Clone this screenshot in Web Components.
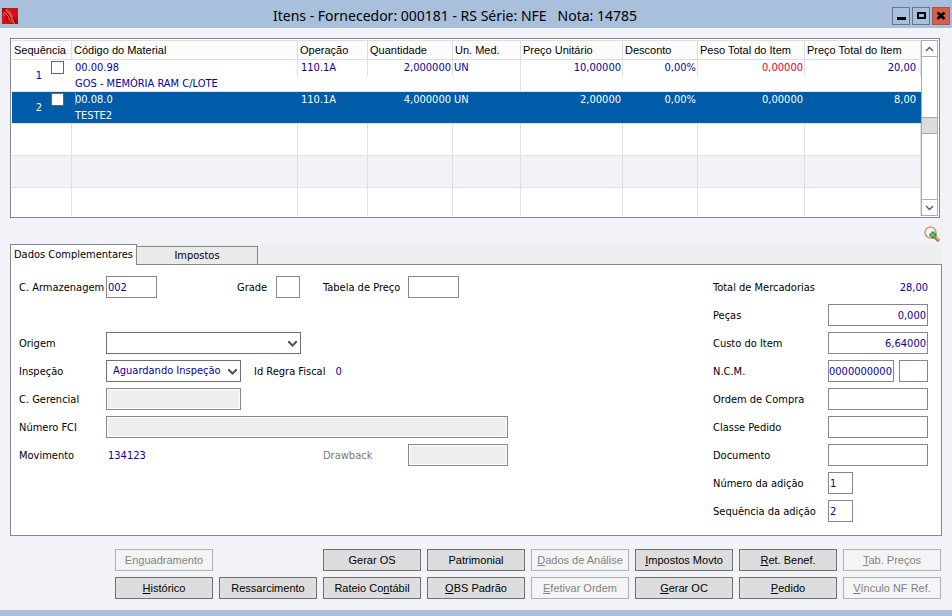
<!DOCTYPE html>
<html lang="pt-BR">
<head>
<meta charset="utf-8">
<title>Itens - Fornecedor</title>
<style>
  :root {
    --ui: "DejaVu Sans Condensed", "DejaVu Sans", sans-serif;
    --sys: "Liberation Sans", Arial, sans-serif;
    --title: "Noto Sans", "Open Sans", sans-serif;
    --face: #f2f3f9;
    --frame: #a8c0dc;
    --edge: #828790;
    --value: #0a00a0;
  }
  body { margin: 0; font: 11px/16px var(--ui); color: #000; background: var(--face); }
</style>
</head>
<body>
<item-window></item-window>
<script>
const define = (name, html, setup) => {
  const tpl = document.createElement('template');
  tpl.innerHTML = html;
  customElements.define(name, class extends HTMLElement {
    connectedCallback() {
      if (this.shadowRoot) return;
      const root = this.attachShadow({ mode: 'open' });
      root.append(tpl.content.cloneNode(true));
      if (setup) setup(this, root);
    }
  });
};

define('title-bar', `
<style>
  :host { display: grid; grid-template-columns: 18px 1fr 60px; align-items: center; height: 28px;
    padding: 4px 2px 0; box-sizing: border-box; background: var(--frame); }
  h1 { margin: 0; font: 14px/20px var(--title); text-align: center; white-space: pre; }
  .logo { display: block; }
  nav { display: flex; gap: 2px; justify-content: flex-end; }
  button { width: 18px; height: 18px; padding: 0; border: 1px solid #66758c; background: #a8c0dc; display: grid; place-items: center; }
  .close { background: #d0614e; border-color: #b8503f; }
</style>
<svg class="logo" width="16" height="16" viewBox="0 0 16 16" aria-hidden="true">
  <rect width="16" height="16" fill="#d41010"/>
  <path d="M0 0h5L0 5zM9 16h7V8z" fill="#b00808"/>
  <path d="M1 6 4 2l3 1 3 4 2 4 2 5h-3L8 9 5 5 2 9z" fill="#ff3a32"/>
  <path d="M5 1l4 4 3 6 2 5M3 3l4 5 2 8M2 6l3 3 1 5" fill="none" stroke="#5c0000" stroke-width="1"/>
  <path d="M4 1l4 3 3 5M2 4l4 4 3 7" fill="none" stroke="#ffb0a8" stroke-width=".6"/>
</svg>
<h1><slot></slot></h1>
<nav>
  <button aria-label="Minimizar"><svg width="16" height="16"><path d="M4 9h9v3H4z"/></svg></button>
  <button aria-label="Maximizar"><svg width="16" height="16"><path d="M4 4h9v7H4zM6 6v3h5V6z" fill-rule="evenodd"/></svg></button>
  <button class="close" aria-label="Fechar"><svg width="16" height="16"><path d="M4.500 4.500l7 6.500M11.500 4.500l-7 6.500" stroke="#000" stroke-width="2.600"/></svg></button>
</nav>`);

define('scroll-bar', `
<style>
  :host { display: flex; flex-direction: column; width: 17px; box-sizing: border-box; border: 1px solid #acacac; background: #fff; }
  button { height: 16px; padding: 0; border: 0; background: #fff; display: grid; place-items: center; box-sizing: border-box; }
  .up { border-bottom: 1px solid #acacac; }
  .down { border-top: 1px solid #acacac; }
  .before { flex: 60; } .after { flex: 65; }
  .thumb { height: 17px; box-sizing: border-box; background: #dcdcdc; border: solid #a8a8a8; border-width: 1px 0; }
  path { fill: none; stroke: #555; stroke-width: 1.3; }
</style>
<button class="up" aria-label="Rolar para cima"><svg width="9" height="6"><path d="M1 5l3.500-3.500L8 5"/></svg></button>
<div class="before"></div><div class="thumb"></div><div class="after"></div>
<button class="down" aria-label="Rolar para baixo"><svg width="9" height="6"><path d="M1 1l3.500 3.500L8 1"/></svg></button>`);

const items = [
  ['1', '00.00.98', 'GOS - MEMÓRIA RAM C/LOTE', '110.1A', '2,000000', 'UN', '10,00000', '0,00%', '0,00000', '20,00'],
  ['2', '00.08.0', 'TESTE2', '110.1A', '4,000000', 'UN', '2,00000', '0,00%', '0,00000', '8,00']
];

define('item-grid', `
<style>
  :host { display: flex; border: 1px solid var(--edge); background: #fff; padding: 1px; height: 176px; }
  .view { flex: 1; overflow: hidden; }
  table { width: 100%; table-layout: fixed; border-collapse: separate; border-spacing: 0; --line: #e1e1e3; }
  th { height: 20px; padding: 0 0 0 2px; box-sizing: border-box; text-align: left; font: 11px/16px var(--sys); white-space: nowrap;
    background: #fcfcfc; border: solid #dedede; border-width: 1px 1px 1px 0; }
  td { height: 32px; padding: 0; box-sizing: border-box; vertical-align: top; white-space: nowrap; color: var(--value);
    border-bottom: 1px solid var(--line); background: linear-gradient(var(--line), var(--line)) right top / 1px 100% no-repeat; }
  .data td { padding: 0 3px; background-size: 1px 16px; }
  .data td:nth-child(5) { background-size: 1px 100%; padding-left: 1px; }
  .data td:first-child { background-image: none; }
  .data td:last-child { padding-right: 5px; }
  .blank.alt td { background-color: #f2f3f9; }
  .data .num { text-align: right; padding-right: 2px; }
  .data .neg { color: #f00018; }
  .selected td { background: #005ba9; color: #fff; }
  .seq { display: grid; grid-template-columns: 27px 13px; column-gap: 9px; justify-content: start; }
  .seq span { line-height: 31px; text-align: right; }
  input { appearance: none; width: 13px; height: 13px; margin: 1px 0 0; border: 1px solid #666; background: #fff; }
  .name { line-height: 15px; }
  .code { position: relative; }
  .selected .code::before { content: ""; position: absolute; left: 0; top: 1px; width: 1px; height: 12px; background: #c98b5a; }
</style>
<div class="view">
<table>
  <colgroup><col style="width:60px"><col><col style="width:70px"><col style="width:85px"><col style="width:68px"><col style="width:102px"><col style="width:75px"><col style="width:107px"><col style="width:116px"></colgroup>
  <thead><tr><th>Sequência</th><th>Código do Material</th><th>Operação</th><th>Quantidade</th><th>Un. Med.</th><th>Preço Unitário</th><th>Desconto</th><th>Peso Total do Item</th><th>Preço Total do Item</th></tr></thead>
  <tbody></tbody>
</table>
</div>
<scroll-bar></scroll-bar>`, (host, root) => {
  const row = (r, i) => `<tr class="data${i === 1 ? ' selected' : ''}"><td><div class="seq"><span>${r[0]}</span><input type="checkbox" aria-label="Item ${r[0]}"></div></td>
    <td><div class="code">${r[1]}</div><div class="name">${r[2]}</div></td><td>${r[3]}</td><td class="num">${r[4]}</td><td>${r[5]}</td>
    <td class="num">${r[6]}</td><td class="num">${r[7]}</td><td class="num${i === 0 ? ' neg' : ''}">${r[8]}</td><td class="num">${r[9]}</td></tr>`;
  const blank = alt => `<tr class="blank${alt ? ' alt' : ''}">${'<td></td>'.repeat(9)}</tr>`;
  root.querySelector('tbody').innerHTML = items.map(row).join('') + blank() + blank(true) + blank();
});

/* Label and control share the grid of the surrounding form. */
define('form-field', `
<style>
  :host { display: contents; }
  label { grid-row: var(--row, auto); grid-column: var(--at, 1); line-height: 24px; height: 22px; white-space: nowrap; }
  .box { grid-row: var(--row, auto); grid-column: var(--to, 2); display: flex; position: relative; width: var(--w, 100%); justify-self: start; }
  input, select { flex: 1; min-width: 0; width: 100%; height: 22px; box-sizing: border-box; margin: 0; padding: 0 1px; border: 1px solid var(--edge); border-radius: 0;
    font: inherit; color: var(--value); background: #fff; outline: 0; }
  select { appearance: none; padding: 0 6px; border-color: #707070; }
  input:disabled { background: #efefef; box-shadow: inset 0 0 0 1px #fff; }
  output { flex: 1; color: var(--value); line-height: 24px; height: 22px; padding-left: 2px; }
  :host([numeric]) input, :host([numeric]) output { text-align: right; }
  :host([muted]) label { color: #777; }
  svg { position: absolute; right: 4px; top: 8px; pointer-events: none; }
</style>
<label for="c"></label><div class="box"></div>`, (host, root) => {
  const kind = host.getAttribute('kind') || 'input', value = host.getAttribute('value') || '';
  const label = root.querySelector('label'), box = root.querySelector('.box');
  label.textContent = host.getAttribute('label');
  if (kind === 'output') box.innerHTML = `<output id="c">${value}</output>`;
  else if (kind === 'select') box.innerHTML = `<select id="c"><option>${value}</option></select><svg width="9" height="7"><path d="M1 1v1l3.500 3.500L8 2V1" fill="none" stroke="#555" stroke-width="2"/></svg>`;
  else box.innerHTML = `<input id="c" value="${value}"${host.hasAttribute('off') ? ' disabled' : ''}>`;
});

define('ncm-field', `
<style>
  :host { display: contents; }
  label { line-height: 24px; height: 22px; }
  div { display: grid; grid-template-columns: 66px 1fr; gap: 5px; }
  input { min-width: 0; height: 22px; box-sizing: border-box; padding: 0; border: 1px solid var(--edge); font: inherit; color: var(--value); background: #fff; }
</style>
<label for="n">N.C.M.</label><div><input id="n" value="0000000000"><input aria-label="N.C.M. complemento"></div>`);

define('tab-panel', `
<style>
  :host { display: block; }
  .strip { display: flex; align-items: flex-end; background: #efefef; height: 20px; }
  button { font: inherit; color: inherit; padding: 0; border: 1px solid var(--edge); border-bottom: 0; box-sizing: border-box; height: 18px; width: 121px; background: #eaeaea; border-left: 0; }
  button[aria-selected=true] { width: 127px; height: 21px; margin-bottom: -1px; background: #fff; border-left: 1px solid var(--edge); position: relative; padding-bottom: 1px; }
  .page { border: 1px solid var(--edge); background: #fff; }
</style>
<div class="strip" role="tablist"><button role="tab" aria-selected="true">Dados Complementares</button><button role="tab" aria-selected="false">Impostos</button></div>
<div class="page" role="tabpanel"><slot></slot></div>`);

define('item-form', `
<style>
  :host { display: flex; justify-content: space-between; padding: 11px 13px 13px 8px; }
  .left, .right { display: grid; grid-auto-rows: 22px; row-gap: 6px; }
  .left { grid-template-columns: 87px 131px 39px 47px 85px 100px; grid-template-rows: repeat(7, 22px); }
  .right { grid-template-columns: 115px 100px; }
  .c2 { --at: 3; --to: 4; } .c3 { --at: 5; --to: 6; }
</style>
<div class="left">
  <form-field label="C. Armazenagem" value="002" style="--row:1;--w:51px"></form-field>
  <form-field class="c2" label="Grade" style="--row:1;--w:24px"></form-field>
  <form-field class="c3" label="Tabela de Preço" style="--row:1;--w:51px"></form-field>
  <form-field kind="select" label="Origem" style="--row:3;--to:2/5;--w:195px"></form-field>
  <form-field kind="select" label="Inspeção" value="Aguardando Inspeção" style="--row:4;--to:2/4;--w:135px"></form-field>
  <rule-field></rule-field>
  <form-field label="C. Gerencial" off style="--row:5;--to:2/4;--w:135px"></form-field>
  <form-field label="Número FCI" off style="--row:6;--to:2/7"></form-field>
  <form-field kind="output" label="Movimento" value="134123" style="--row:7"></form-field>
  <form-field class="c3" muted off label="Drawback" style="--row:7"></form-field>
</div>
<div class="right">
  <form-field kind="output" numeric label="Total de Mercadorias" value="28,00"></form-field>
  <form-field numeric label="Peças" value="0,000"></form-field>
  <form-field numeric label="Custo do Item" value="6,64000"></form-field>
  <ncm-field></ncm-field>
  <form-field label="Ordem de Compra"></form-field>
  <form-field label="Classe Pedido"></form-field>
  <form-field label="Documento"></form-field>
  <form-field label="Número da adição" value="1" style="--w:25px"></form-field>
  <form-field label="Sequência da adição" value="2" style="--w:25px"></form-field>
</div>`);

define('rule-field', `
<style>
  :host { grid-row: 4; grid-column: 3 / 7; display: flex; gap: 10px; padding-left: 17px; line-height: 24px; height: 22px; }
  output { color: var(--value); }
</style>
<label for="r">Id Regra Fiscal</label><output id="r">0</output>`);

define('action-button', `
<style>
  :host { display: block; }
  button { width: 100%; height: 22px; padding: 0; border: 1px solid #707070; background: #ddd; color: #000; font: 11px/16px var(--sys); white-space: nowrap; display: block; }
  button:disabled { border-color: #adb2b5; background: #f4f4f4; color: #838383; }
</style>
<button><slot></slot></button>`, (host, root) => { root.querySelector('button').disabled = host.hasAttribute('off'); });

define('action-bar', `
<style>
  :host { display: grid; grid-template-columns: repeat(8, 1fr); gap: 6px; padding: 13px 11px 11px 115px; }
  .s3 { grid-column: 3; } .s1 { grid-column: 1; }
</style>
<action-button off>En<u>g</u>uadramento</action-button>
<action-button class="s3">Gerar OS</action-button>
<action-button>Patrimonial</action-button>
<action-button off><u>D</u>ados de Análise</action-button>
<action-button><u>I</u>mpostos Movto</action-button>
<action-button><u>R</u>et. Benef.</action-button>
<action-button off><u>T</u>ab. Preços</action-button>
<action-button class="s1"><u>H</u>istórico</action-button>
<action-button>Ressarcimento</action-button>
<action-button>Rateio Co<u>n</u>tábil</action-button>
<action-button><u>O</u>BS Padrão</action-button>
<action-button off><u>E</u>fetivar Ordem</action-button>
<action-button><u>G</u>erar OC</action-button>
<action-button><u>P</u>edido</action-button>
<action-button off><u>V</u>ínculo NF Ref.</action-button>`);

define('zoom-tool', `
<style>
  :host { display: flex; justify-content: flex-end; padding: 8px 12px 2px; }
  button { padding: 0; border: 0; background: none; width: 16px; height: 16px; }
  svg { display: block; }
</style>
<button aria-label="Ampliar"><svg width="16" height="16" viewBox="0 0 16 16">
  <path d="M11 11l4 4" stroke="#b3713d" stroke-width="3.400"/><path d="M12 11l3 3" stroke="#efc27c" stroke-width="1.400"/>
  <circle cx="6.500" cy="6.500" r="5.500" fill="#f3f6fa" stroke="#d39a62" stroke-width="1.500"/>
  <path d="M7.500 5.500h3v2h2v3h-2v2h-3v-2h-2v-3h2z" fill="#2f8535"/><path d="M9 7v4M7 9h4" stroke="#9bd491" stroke-width="1"/>
</svg></button>`);

define('item-window', `
<style>
  :host { display: flex; flex-direction: column; min-height: 100vh; box-sizing: border-box; border-bottom: 6px solid var(--frame); }
  item-grid { margin: 10px 12px 0 10px; }
  tab-panel { margin: 0 10px; }
</style>
<title-bar>Itens - Fornecedor: 000181 - RS Série: NFE   Nota: 14785</title-bar>
<item-grid></item-grid>
<zoom-tool></zoom-tool>
<tab-panel><item-form></item-form></tab-panel>
<action-bar></action-bar>`);
</script>
</body>
</html>
